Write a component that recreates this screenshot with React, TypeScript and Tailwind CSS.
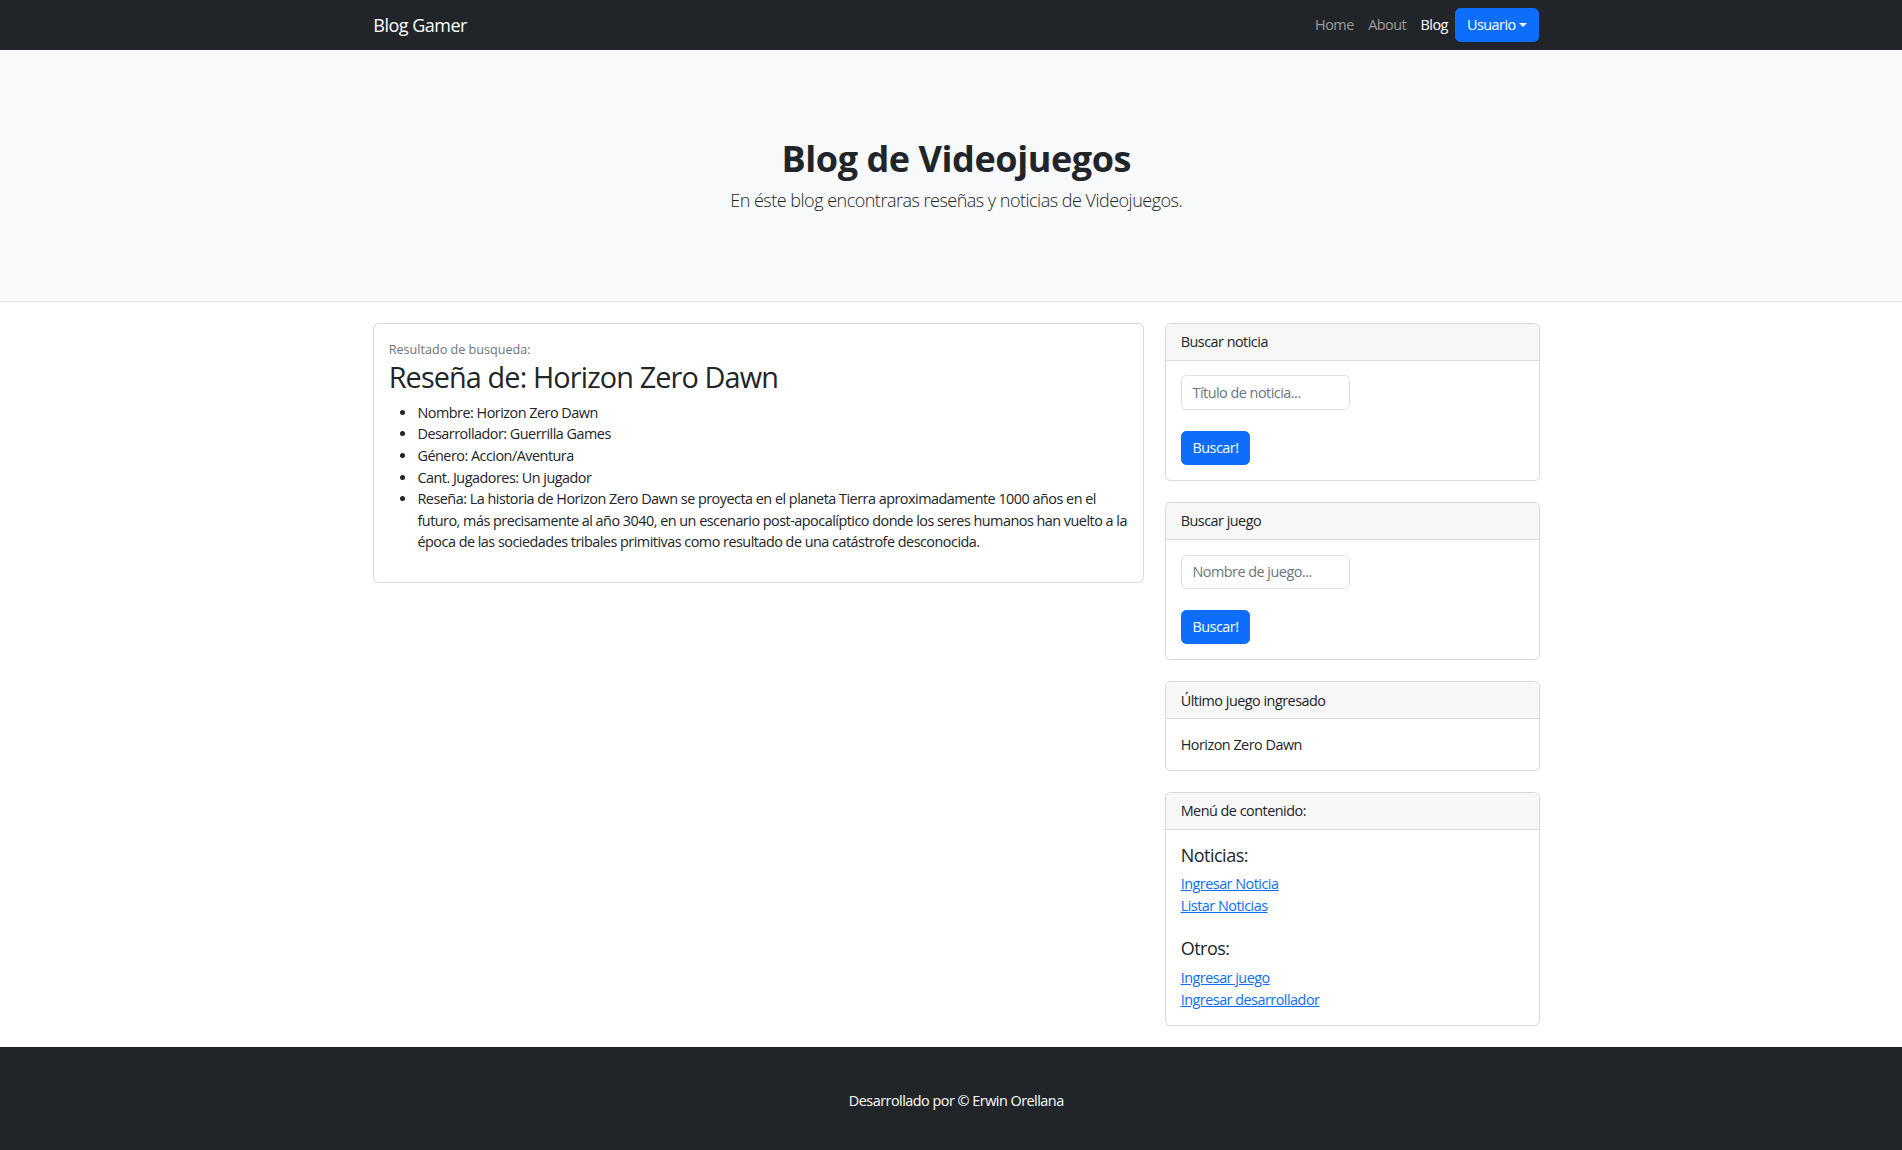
import React from "react";

const cont = "ml-[362.5px] w-[1187.5px] px-[10.8px]";

function SideCard({ title, children }: { title: string; children: React.ReactNode }) {
  return (
    <div className="mb-[21.6px] rounded-[5.4px] border border-[#d9d9da] bg-white">
      <div className="rounded-t-[5.4px] border-b border-[#d9d9da] bg-[#f7f7f7] px-[14.4px] py-[7.2px]">{title}</div>
      <div className="p-[14.4px]">{children}</div>
    </div>
  );
}

function SearchForm({ placeholder }: { placeholder: string }) {
  return (
    <div>
      <input
        placeholder={placeholder}
        className="block h-[34.4px] w-[169px] rounded-[5.4px] border border-[#dee2e6] px-[10.8px] text-[14.4px] tracking-[-0.035em] text-[#212529] placeholder:text-[#6c757d] outline-none"
      />
      <button className="mt-[21px] rounded-[5.4px] border border-[#0d6efd] bg-[#0d6efd] px-[10.8px] py-[5.4px] text-[14.4px] leading-[21.6px] text-white">
        Buscar!
      </button>
    </div>
  );
}

export default function App() {
  return (
    <div className="min-h-screen bg-white text-[14.4px] leading-[21.6px] tracking-[-0.035em] text-[#212529] [font-family:'Open_Sans',sans-serif]">
      {/* Navbar */}
      <nav className="bg-[#212529] py-[7.2px]">
        <div className={`${cont} flex items-center justify-between`}>
          <a className="py-[4.5px] text-[18px] leading-[27px] text-white">Blog Gamer</a>
          <div className="flex items-center">
            <a className="px-[7.2px] py-[7.2px] text-[rgba(255,255,255,0.55)]">Home</a>
            <a className="px-[7.2px] py-[7.2px] text-[rgba(255,255,255,0.55)]">About</a>
            <a className="px-[7.2px] py-[7.2px] text-white">Blog</a>
            <button className="flex items-center rounded-[5.4px] border border-[#0d6efd] bg-[#0d6efd] px-[10.8px] py-[5.4px] leading-[21.6px] text-white">
              Usuario
              <span className="ml-[3.7px] inline-block h-0 w-0 border-x-[4.3px] border-t-[4.3px] border-x-transparent border-t-white" />
            </button>
          </div>
        </div>
      </nav>

      {/* Header */}
      <header className="mb-[21.6px] border-b border-[#dee2e6] bg-[#f8f9fa] py-[43.2px]">
        <div className={cont}>
          <div className="my-[43.2px] text-center">
            <h1 className="mb-[7.2px] text-[36px] leading-[43.2px] font-bold tracking-[-0.012em]">Blog de Videojuegos</h1>
            <p className="text-[18px] leading-[27px] font-light">En éste blog encontraras reseñas y noticias de Videojuegos.</p>
          </div>
        </div>
      </header>

      {/* Content */}
      <div className={cont}>
        <div className="flex gap-[21.6px]">
          <div className="w-[770.4px] shrink-0">
            <div className="rounded-[5.4px] border border-[#d9d9da] p-[14.4px]">
              <div className="text-[12.6px] leading-[21.6px] tracking-normal text-[#6c757d]">Resultado de busqueda:</div>
              <h2 className="mb-[7.2px] text-[28.8px] leading-[34.56px] font-normal tracking-[-0.03em]">Reseña de: Horizon Zero Dawn</h2>
              <ul className="mb-[14.4px] list-disc pl-[28.8px]">
                <li>Nombre: Horizon Zero Dawn</li>
                <li>Desarrollador: Guerrilla Games</li>
                <li>Género: Accion/Aventura</li>
                <li>Cant. Jugadores: Un jugador</li>
                <li>
                  Reseña: La historia de Horizon Zero Dawn se proyecta en el planeta Tierra aproximadamente 1000 años en el
                  futuro, más precisamente al año 3040, en un escenario post-apocalíptico donde los seres humanos han vuelto a
                  la época de las sociedades tribales primitivas como resultado de una catástrofe desconocida.
                </li>
              </ul>
            </div>
          </div>

          <div className="w-[374.4px] shrink-0">
            <SideCard title="Buscar noticia">
              <SearchForm placeholder="Título de noticia..." />
            </SideCard>
            <SideCard title="Buscar juego">
              <SearchForm placeholder="Nombre de juego..." />
            </SideCard>
            <SideCard title="Último juego ingresado">
              <div>Horizon Zero Dawn</div>
            </SideCard>
            <SideCard title="Menú de contenido:">
              <h5 className="mb-[7.2px] text-[18px] leading-[21.6px] font-normal">Noticias:</h5>
              <a className="block text-[#0d6efd] underline">Ingresar Noticia</a>
              <a className="block text-[#0d6efd] underline">Listar Noticias</a>
              <div className="h-[21.6px]" />
              <h5 className="mb-[7.2px] text-[18px] leading-[21.6px] font-normal">Otros:</h5>
              <a className="block text-[#0d6efd] underline">Ingresar juego</a>
              <a className="block text-[#0d6efd] underline">Ingresar desarrollador</a>
            </SideCard>
          </div>
        </div>
      </div>

      {/* Footer */}
      <footer className="bg-[#212529] py-[43.2px]">
        <div className={cont}>
          <p className="text-center text-white">Desarrollado por © Erwin Orellana</p>
        </div>
      </footer>
    </div>
  );
}
